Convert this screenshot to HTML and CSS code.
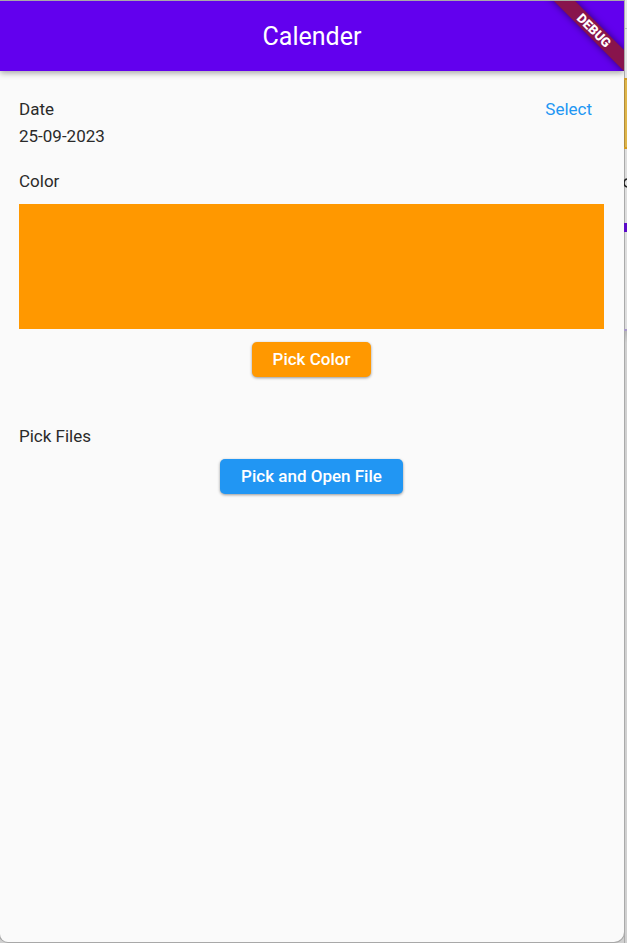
FILE: index.html
```html
<!DOCTYPE html>
<html lang="en">
<head>
<meta charset="utf-8">
<meta name="viewport" content="width=device-width, initial-scale=1">
<title>Calender</title>
<link rel="stylesheet" href="styles.css">
</head>
<body>
<div class="window">
  <header class="app-bar">
    <h1 class="title">Calender</h1>
    <div class="banner"><span class="banner-label">DEBUG</span></div>
  </header>
  <main class="content">
    <section class="date-row">
      <div>
        <h2 class="label">Date</h2>
        <p class="label">25-09-2023</p>
      </div>
      <button class="select" type="button">Select</button>
    </section>
    <section class="color-section">
      <h2 class="label">Color</h2>
      <div class="swatch"></div>
      <button class="button button-color" type="button">Pick Color</button>
    </section>
    <section class="file-section">
      <h2 class="label">Pick Files</h2>
      <button class="button button-file" type="button">Pick and Open File</button>
    </section>
  </main>
</div>
<div class="behind">
  <div class="behind-top"></div>
  <div class="behind-card"></div>
  <svg class="behind-mark" width="3" height="74" viewBox="0 0 3 74"><path d="M3 30Q0 30.500 0 34T3 38" fill="none" stroke="#222" stroke-width="1.500"/></svg>
  <div class="behind-bar"></div>
  <div class="behind-panel"></div>
  <div class="behind-rest"></div>
</div>
</body>
</html>
```
FILE: styles.css
```css
* {
  box-sizing: border-box;
}

body {
  display: flex;
  min-height: 100vh;
  margin: 0;
  background: #d0d0d0;
  color: #2a2a2a;
  font-family: Roboto, "Liberation Sans", sans-serif;
}

.window {
  flex: 1;
  margin: 1px 0;
  overflow: hidden;
  background: #fafafa;
  border-radius: 0 0 10px 8px;
  box-shadow: 0 0 0 1px #a8a8a8;
}

.app-bar {
  position: relative;
  display: flex;
  align-items: center;
  justify-content: center;
  height: 70px;
  padding-top: 2px;
  background: #6200ee;
  color: #fff;
  box-shadow: 0 2px 6px rgba(0, 0, 0, 0.35);
}

.title {
  margin: 0;
  font-size: 25px;
  font-weight: 400;
  line-height: 30px;
}

.banner {
  position: absolute;
  top: 0;
  right: 0;
  width: 80px;
  height: 70px;
  overflow: hidden;
}

.banner-label {
  position: absolute;
  top: 22px;
  left: -10px;
  width: 120px;
  background: #88144c;
  box-shadow: 0 0 7px rgba(0, 0, 0, 0.5);
  font-size: 13px;
  font-weight: 900;
  line-height: 15px;
  text-align: center;
  transform: rotate(45deg);
}

.content {
  padding: 25px 20px 20px 19px;
}

.label {
  margin: 0;
  font-size: 17px;
  font-weight: 400;
  line-height: 27px;
}

.date-row {
  display: flex;
  align-items: flex-start;
  justify-content: space-between;
}

.select {
  padding: 0 12px;
  border: 0;
  background: none;
  color: #2196f3;
  font: 400 17px/27px Roboto, "Liberation Sans", sans-serif;
}

.color-section,
.file-section {
  display: flex;
  flex-direction: column;
  align-items: flex-start;
}

.color-section {
  margin-top: 18px;
}

.file-section {
  margin-top: 46px;
  gap: 9px;
}

.swatch {
  width: 100%;
  height: 125px;
  margin: 9px 0 13px;
  background: #ff9800;
}

.button {
  align-self: center;
  padding: 0 21px;
  border: 0;
  border-radius: 5px;
  box-shadow: 0 1px 3px rgba(0, 0, 0, 0.4);
  color: #fff;
  font: 500 17px/35px Roboto, "Liberation Sans", sans-serif;
}

.button-color {
  background: #ff9800;
}

.button-file {
  background: #2196f3;
}

.behind {
  display: flex;
  flex-direction: column;
  width: 3px;
  background: linear-gradient(90deg, #aaa 1px, #dedede 1px);
}

.behind-top {
  height: 78px;
  margin-left: 1px;
  background: linear-gradient(#e4e4e4 28px, #bbb 28px, #bbb 29px, #e4e4e4 29px);
}

.behind-card {
  height: 71px;
  border: solid #d39b22;
  border-width: 2px 0;
  background: linear-gradient(90deg, #b08c3c 1px, #e0b64a 1px);
}

.behind-bar {
  height: 9px;
  background: #5b0bc8;
}

.behind-panel {
  height: 99px;
  border-bottom: 2px solid #a99bc8;
}

.behind-rest {
  flex: 1;
  margin-left: 1px;
  background: linear-gradient(#b8b8b8, #d0d0d0 12px);
}
```
